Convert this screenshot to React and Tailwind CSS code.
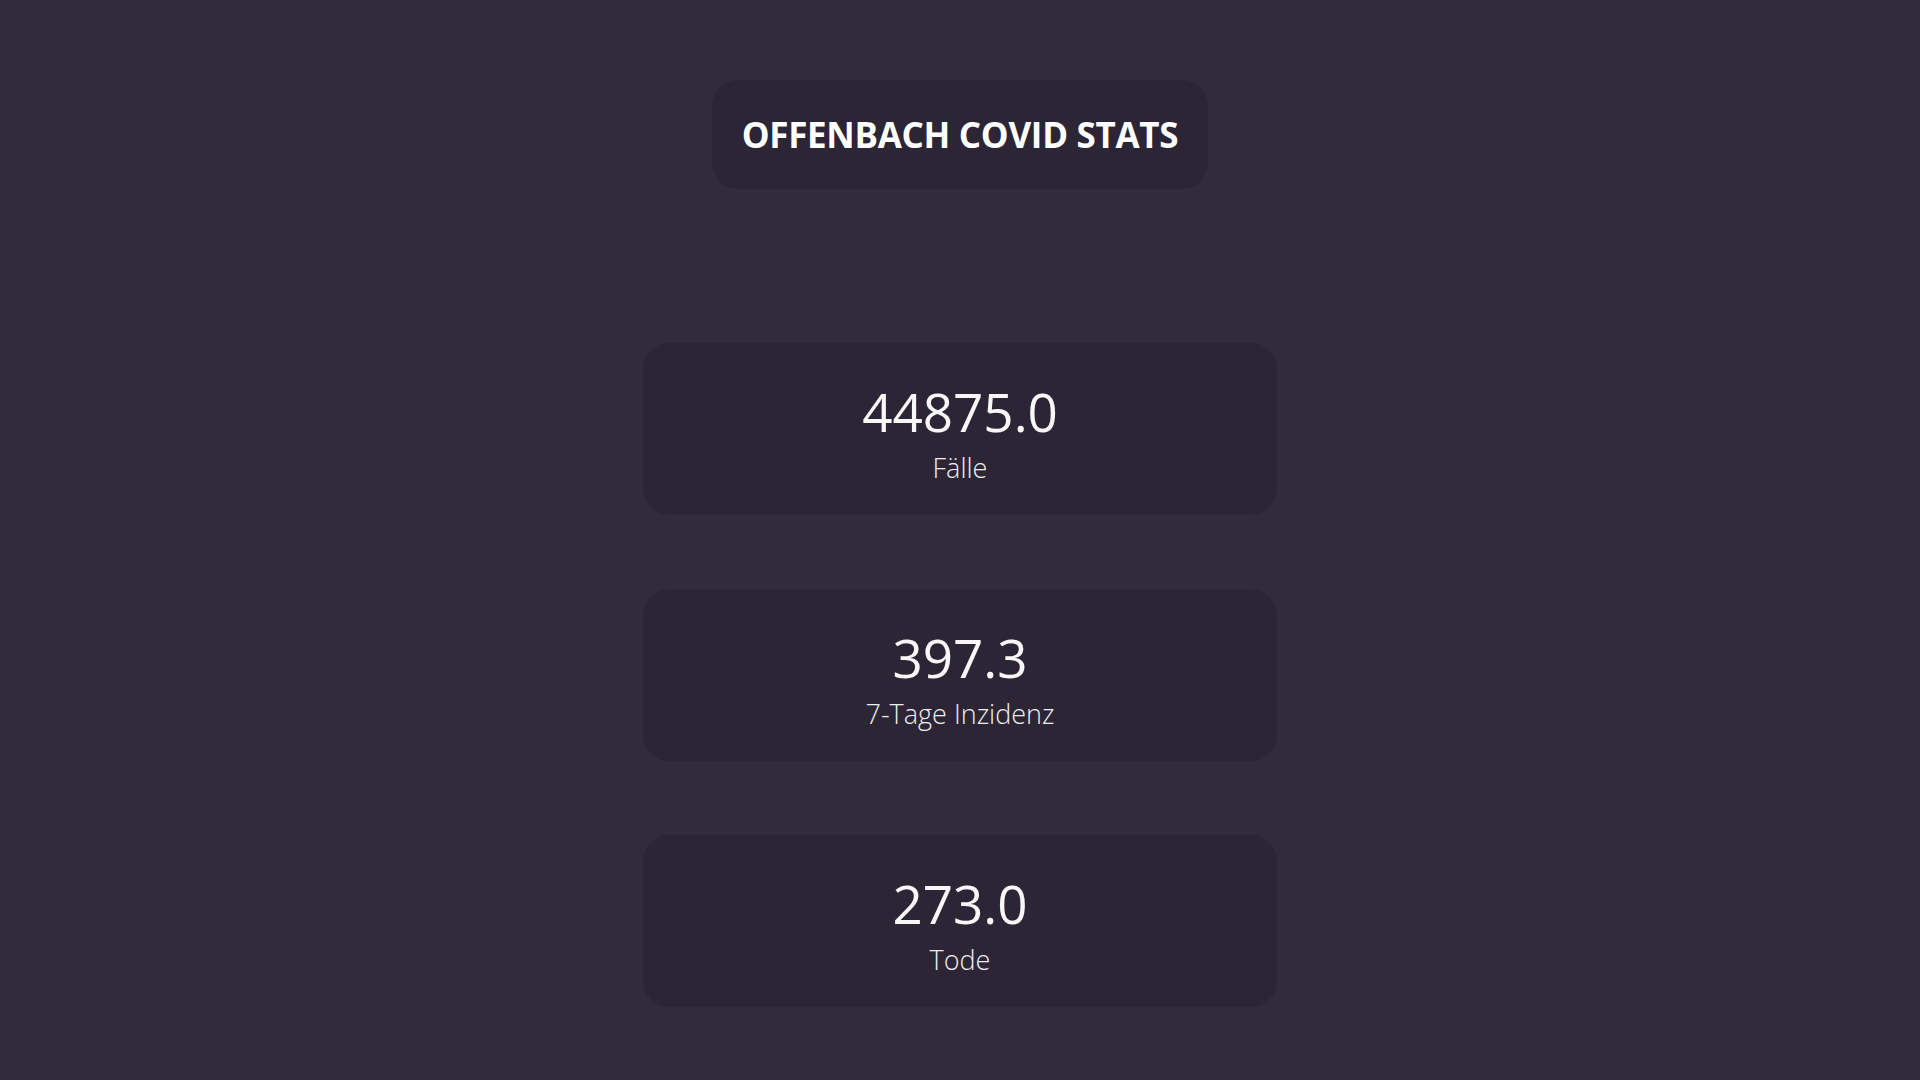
import React from "react";

const stats = [
  { value: "44875.0", label: "Fälle" },
  { value: "397.3", label: "7-Tage Inzidenz" },
  { value: "273.0", label: "Tode" },
];

function StatCard({ value, label }) {
  return (
    <div className="flex h-[172px] w-[634px] flex-col items-center justify-center rounded-[26px] bg-[#2b2535] pt-[10px]">
      <div className="text-[53px] leading-[58px] font-normal text-[#f7f7f7]">{value}</div>
      <div className="mt-[9px] text-[27px] leading-[36px] font-light text-[#ededed]">{label}</div>
    </div>
  );
}

export default function App() {
  return (
    <div
      className="flex min-h-screen w-full flex-col items-center bg-[#322b3e] pt-[80px]"
      style={{ fontFamily: '"Open Sans", "Noto Sans", sans-serif' }}
    >
      <div className="flex h-[109px] w-[496px] items-center justify-center rounded-[26px] bg-[#2b2535]">
        <h1 className="pt-[2px] text-[35px] font-bold tracking-[-0.3px] text-white">
          OFFENBACH COVID STATS
        </h1>
      </div>

      <div className="mt-[154px] flex flex-col gap-[74px]">
        {stats.map((s) => (
          <StatCard key={s.label} value={s.value} label={s.label} />
        ))}
      </div>
    </div>
  );
}
